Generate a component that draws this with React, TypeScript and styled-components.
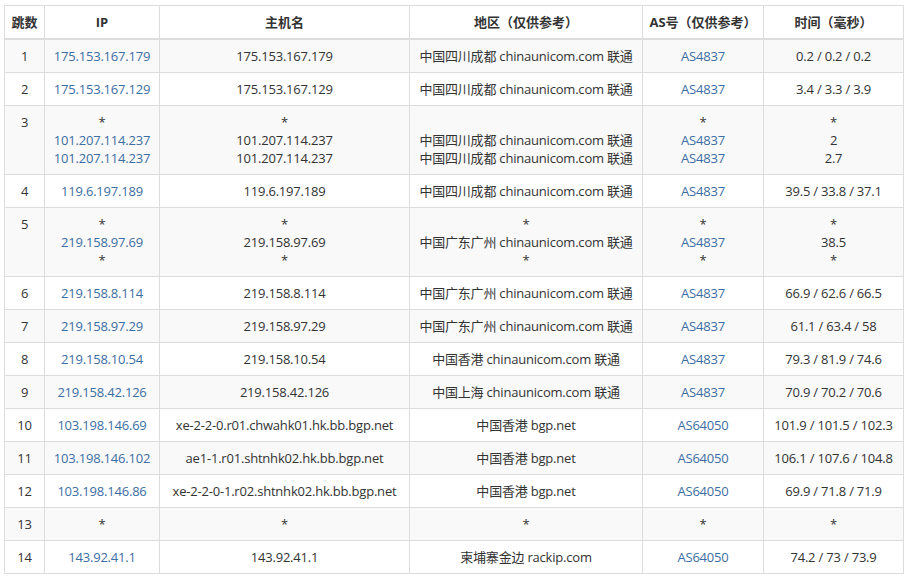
import React from "react";
import styled, { createGlobalStyle } from "styled-components";

const Global = createGlobalStyle`
  body { margin: 0; background: #fff; font-family: "Open Sans", "Noto Sans CJK SC", sans-serif; font-size: 13px; color: #333; }
`;

const Wrap = styled.div`
  padding: 5px 5px 0 4px;
`;

const Table = styled.table`
  width: 899px;
  border-collapse: collapse;
  table-layout: fixed;
`;

const Col = styled.col<{ w: number }>`
  width: ${(p) => p.w}px;
`;

const Th = styled.th`
  border: 1px solid #ddd;
  border-bottom: 2px solid #ddd;
  padding: 7px 2px;
  line-height: 18px;
  font-weight: bold;
  text-align: center;
  color: #333;
  white-space: nowrap;
  overflow: hidden;
`;

const Tr = styled.tr<{ odd: boolean }>`
  background: ${(p) => (p.odd ? "#f9f9f9" : "#fff")};
`;

const Td = styled.td`
  border: 1px solid #ddd;
  padding: 7px 2px 7px;
  line-height: 18px;
  text-align: center;
  vertical-align: top;
  white-space: nowrap;
  overflow: hidden;
  letter-spacing: -0.2px;
`;

const Link = styled.span`
  color: #3c6ea3;
`;

const Line = styled.div``;

type Hop = { n: number; ip: string[]; host: string[]; geo: string[]; as: string[]; t: string[] };

const geoSC = "中国四川成都 chinaunicom.com 联通";
const geoGZ = "中国广东广州 chinaunicom.com 联通";
const hops: Hop[] = [
  { n: 1, ip: ["175.153.167.179"], host: ["175.153.167.179"], geo: [geoSC], as: ["AS4837"], t: ["0.2 / 0.2 / 0.2"] },
  { n: 2, ip: ["175.153.167.129"], host: ["175.153.167.129"], geo: [geoSC], as: ["AS4837"], t: ["3.4 / 3.3 / 3.9"] },
  { n: 3, ip: ["*", "101.207.114.237", "101.207.114.237"], host: ["*", "101.207.114.237", "101.207.114.237"], geo: ["", geoSC, geoSC], as: ["*", "AS4837", "AS4837"], t: ["*", "2", "2.7"] },
  { n: 4, ip: ["119.6.197.189"], host: ["119.6.197.189"], geo: [geoSC], as: ["AS4837"], t: ["39.5 / 33.8 / 37.1"] },
  { n: 5, ip: ["*", "219.158.97.69", "*"], host: ["*", "219.158.97.69", "*"], geo: ["*", geoGZ, "*"], as: ["*", "AS4837", "*"], t: ["*", "38.5", "*"] },
  { n: 6, ip: ["219.158.8.114"], host: ["219.158.8.114"], geo: [geoGZ], as: ["AS4837"], t: ["66.9 / 62.6 / 66.5"] },
  { n: 7, ip: ["219.158.97.29"], host: ["219.158.97.29"], geo: [geoGZ], as: ["AS4837"], t: ["61.1 / 63.4 / 58"] },
  { n: 8, ip: ["219.158.10.54"], host: ["219.158.10.54"], geo: ["中国香港 chinaunicom.com 联通"], as: ["AS4837"], t: ["79.3 / 81.9 / 74.6"] },
  { n: 9, ip: ["219.158.42.126"], host: ["219.158.42.126"], geo: ["中国上海 chinaunicom.com 联通"], as: ["AS4837"], t: ["70.9 / 70.2 / 70.6"] },
  { n: 10, ip: ["103.198.146.69"], host: ["xe-2-2-0.r01.chwahk01.hk.bb.bgp.net"], geo: ["中国香港 bgp.net"], as: ["AS64050"], t: ["101.9 / 101.5 / 102.3"] },
  { n: 11, ip: ["103.198.146.102"], host: ["ae1-1.r01.shtnhk02.hk.bb.bgp.net"], geo: ["中国香港 bgp.net"], as: ["AS64050"], t: ["106.1 / 107.6 / 104.8"] },
  { n: 12, ip: ["103.198.146.86"], host: ["xe-2-2-0-1.r02.shtnhk02.hk.bb.bgp.net"], geo: ["中国香港 bgp.net"], as: ["AS64050"], t: ["69.9 / 71.8 / 71.9"] },
  { n: 13, ip: ["*"], host: ["*"], geo: ["*"], as: ["*"], t: ["*"] },
  { n: 14, ip: ["143.92.41.1"], host: ["143.92.41.1"], geo: ["柬埔寨金边 rackip.com"], as: ["AS64050"], t: ["74.2 / 73 / 73.9"] },
];

const lines = (arr: string[], link = false) =>
  arr.map((s, i) => (
    <Line key={i}>{link && s !== "*" ? <Link>{s}</Link> : s || "\u00a0"}</Line>
  ));

export default function App() {
  return (
    <Wrap>
      <Global />
      <Table>
        <colgroup>
          <Col w={40} />
          <Col w={115} />
          <Col w={250} />
          <Col w={233} />
          <Col w={121} />
          <Col w={140} />
        </colgroup>
        <thead>
          <tr>
            <Th>跳数</Th>
            <Th>IP</Th>
            <Th>主机名</Th>
            <Th>地区（仅供参考）</Th>
            <Th>AS号（仅供参考）</Th>
            <Th>时间（毫秒）</Th>
          </tr>
        </thead>
        <tbody>
          {hops.map((h) => (
            <Tr key={h.n} odd={h.n % 2 === 1}>
              <Td>{h.n}</Td>
              <Td>{lines(h.ip, true)}</Td>
              <Td>{lines(h.host)}</Td>
              <Td>{lines(h.geo)}</Td>
              <Td>{lines(h.as, true)}</Td>
              <Td>{lines(h.t)}</Td>
            </Tr>
          ))}
        </tbody>
      </Table>
    </Wrap>
  );
}
